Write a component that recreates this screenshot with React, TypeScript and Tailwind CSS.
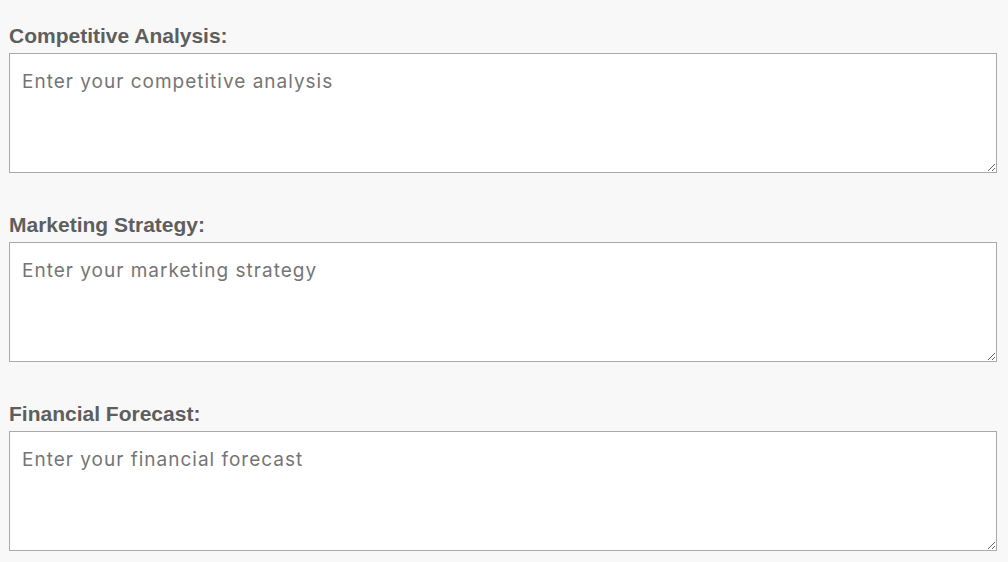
const fields = [
  { id: 'competitive', label: 'Competitive Analysis:', placeholder: 'Enter your competitive analysis' },
  { id: 'marketing', label: 'Marketing Strategy:', placeholder: 'Enter your marketing strategy' },
  { id: 'financial', label: 'Financial Forecast:', placeholder: 'Enter your financial forecast' },
]

export default function App() {
  return (
    <div className="min-h-screen bg-[#f8f8f8] pl-[9px] pr-[11px] pt-6">
      {fields.map((f) => (
        <div key={f.id} className="mb-10">
          <label
            htmlFor={f.id}
            className="mb-1.5 block text-[21px] leading-[23px] font-bold text-[#5e5e5e]"
            style={{ fontFamily: '"Liberation Sans", Arial, sans-serif' }}
          >
            {f.label}
          </label>
          <textarea
            id={f.id}
            placeholder={f.placeholder}
            className="block h-[120px] w-full border border-[#aaaaaa] bg-white px-3 pt-[14px] pb-3 text-[19px] tracking-[1px] text-[#333] placeholder:text-[#757575] focus:outline-none"
            style={{ fontFamily: 'Inter, "Noto Sans", sans-serif' }}
          />
        </div>
      ))}
    </div>
  )
}
